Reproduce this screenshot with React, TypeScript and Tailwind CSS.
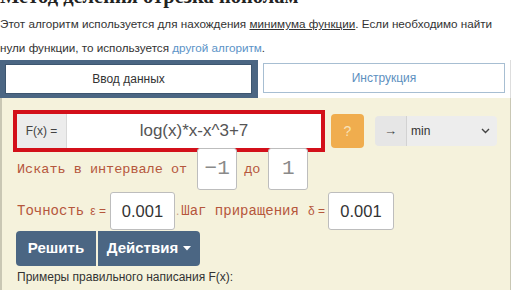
import React from "react";

export default function App() {
  return (
    <div className="w-[516px] h-[290px] overflow-hidden bg-white text-[#333] font-['Liberation_Sans',Arial,sans-serif]">
      <h1 className="-mt-[16px] mb-[4px] text-[20.5px] leading-[24px] font-bold text-[#222] font-['Liberation_Serif','Times_New_Roman',serif] whitespace-nowrap">
        Метод деления отрезка пополам
      </h1>
      <p className="text-[11.7px] leading-[24px] text-[#333] whitespace-nowrap">
        Этот алгоритм используется для нахождения <span className="underline">минимума функции</span>. Если необходимо найти
        <br />
        нули функции, то используется <span className="text-[#5b93c7]">другой алгоритм</span>.
      </p>
      <div className="w-[511px]">
        <div className="flex h-[38px]">
          <div className="w-[258px] bg-[#4b6683] pl-[5px] pr-[6px] pt-[4px] pb-[4px]">
            <div className="h-full bg-white border border-[#3d5670] flex items-center justify-center text-[12px] text-[#333]">
              Ввод данных
            </div>
          </div>
          <div className="flex-1 bg-white pl-[5px] pr-[5px] pt-[3px] pb-[5px] border-r border-[#ddd]">
            <div className="h-full border border-[#a7bed2] flex items-center justify-center text-[12px] text-[#5d90c0]">
              Инструкция
            </div>
          </div>
        </div>
        <div className="h-[200px] bg-[#f5f2dc] border-l-2 border-r border-[#c9c7b4] pl-[15px] pt-[16px]">
          <div className="flex items-center h-[34px]">
            <div className="flex w-[304px] h-[34px] outline-4 outline-[#d3101a]">
              <div className="w-[50px] bg-[#ececec] border-r border-[#d8d8d8] flex items-center justify-center text-[12px] text-[#444]">
                F(x) =
              </div>
              <div className="flex-1 bg-white flex items-center justify-center text-[17px] text-[#555]">
                log(x)*x-x^3+7
              </div>
            </div>
            <div className="ml-[10px] w-[33px] h-[34px] rounded-[4px] bg-[#f0ad4e] flex items-center justify-center text-[14px] text-[#f8e2b8]">
              ?
            </div>
            <div className="ml-[11px] flex h-[30px] rounded-[4px] overflow-hidden">
              <div className="w-[32px] bg-[#e6e6e6] border-r border-[#d2d2d2] flex items-center justify-center text-[13px] text-[#444]">
                →
              </div>
              <div className="w-[90px] bg-[#ededed] flex items-center justify-between pl-[4px] pr-[7px] text-[12px] text-[#333]">
                <span>min</span>
                <svg width="9" height="6" viewBox="0 0 9 6" fill="none" stroke="#444" strokeWidth="1.4">
                  <path d="M1 1l3.5 3.5L8 1" />
                </svg>
              </div>
            </div>
          </div>
          <div className="flex items-center h-[42px] font-['Liberation_Mono','Courier_New',monospace] text-[13.5px] text-[#b5573c]">
            <span className="whitespace-pre pt-[3px]">Искать в интервале от</span>
            <div className="ml-[10px] w-[40px] h-[42px] bg-white border border-[#bdbdbd] rounded-[3px] flex items-center justify-center text-[21px] text-[#8a8a8a]">
              −1
            </div>
            <span className="ml-[7px] pt-[3px]">до</span>
            <div className="ml-[8px] w-[40px] h-[42px] bg-white border border-[#bdbdbd] rounded-[3px] flex items-center justify-center text-[21px] text-[#8a8a8a]">
              1
            </div>
          </div>
          <div className="mt-[2px] flex items-center h-[38px] text-[#b5573c]">
            <span className="font-['Liberation_Mono','Courier_New',monospace] text-[14px]">Точность</span>
            <span className="ml-[6px] text-[12px]">ε =</span>
            <div className="ml-[4px] w-[65px] h-[38px] bg-white border border-[#bdbdbd] rounded-[3px] flex items-center justify-center text-[16.5px] text-[#333]">
              0.001
            </div>
            <span className="ml-[1px] text-[12px] text-[#c9a08a]">.</span>
            <span className="ml-[2px] font-['Liberation_Mono','Courier_New',monospace] text-[14px] whitespace-pre">Шаг приращения</span>
            <span className="ml-[9px] text-[12px]">δ =</span>
            <div className="ml-[3px] w-[66px] h-[38px] bg-white border border-[#bdbdbd] rounded-[3px] flex items-center justify-center text-[16.5px] text-[#333]">
              0.001
            </div>
          </div>
          <div className="mt-[1px] flex h-[35px] gap-[2px] -ml-[1px]">
            <div className="w-[80px] rounded-l-[4px] bg-[#4b6683] flex items-center justify-center text-white font-bold text-[15px]">
              Решить
            </div>
            <div className="w-[102px] rounded-r-[4px] bg-[#4b6683] flex items-center justify-center gap-[5px] text-white font-bold text-[15px]">
              Действия
              <svg width="8" height="5" viewBox="0 0 8 5">
                <path d="M0 0h8L4 4.5z" fill="white" />
              </svg>
            </div>
          </div>
          <div className="mt-[4px] text-[12px] leading-[14px] text-[#333]">
            Примеры правильного написания F(x):
          </div>
        </div>
      </div>
    </div>
  );
}
